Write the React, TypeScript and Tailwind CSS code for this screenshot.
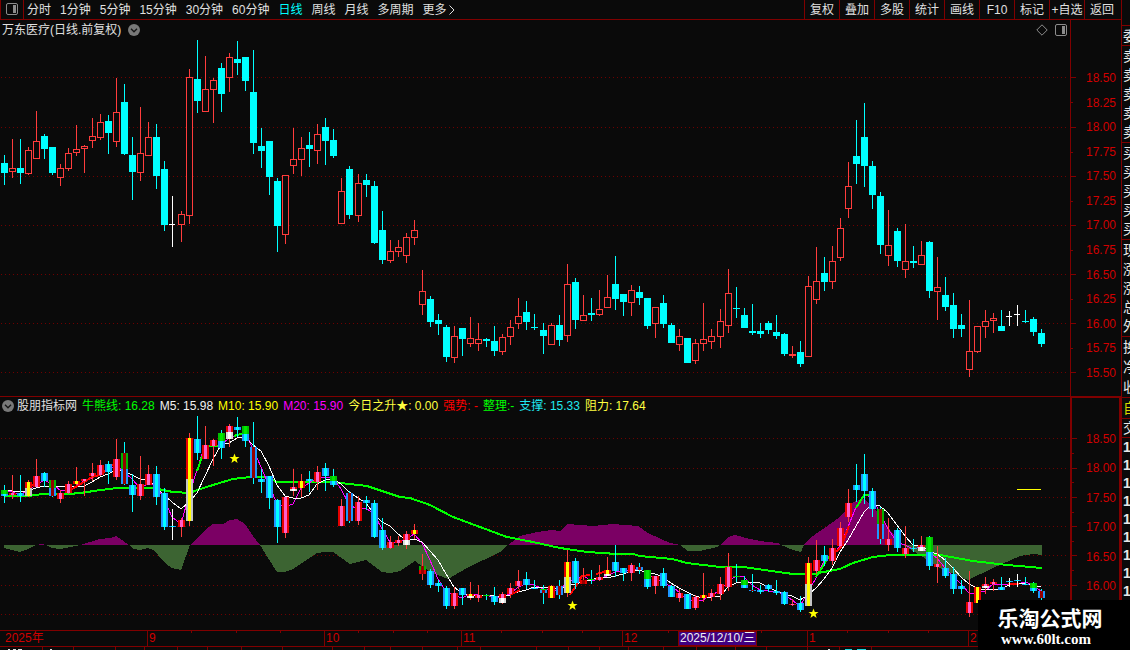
import React from "react";

type Kind = "U" | "D" | "W" | "S";
type Candle = [x: number, high: number, top: number, bottom: number, low: number, kind: Kind];

const BG = "#0a0a0a";

const periods = ["分时", "1分钟", "5分钟", "15分钟", "30分钟", "60分钟", "日线", "周线", "月线", "多周期", "更多"];
const tools = ["复权", "叠加", "多股", "统计", "画线", "F10", "标记", "+自选", "返回"];

const indicators = [
  { text: "牛熊线: 16.28", color: "text-[#00ff00]" },
  { text: "M5: 15.98", color: "text-[#f0f0f0]" },
  { text: "M10: 15.90", color: "text-[#ffff00]" },
  { text: "M20: 15.90", color: "text-[#ff00ff]" },
  { text: "今日之升★: 0.00", color: "text-[#ffff40]" },
  { text: "强势: -", color: "text-[#ff0000]" },
  { text: "整理:-", color: "text-[#00ff00]" },
  { text: "支撑: 15.33", color: "text-[#20e8f0]" },
  { text: "阻力: 17.64", color: "text-[#ffff40]" },
];

const priceLabels = ["18.50", "18.25", "18.00", "17.75", "17.50", "17.25", "17.00", "16.75", "16.50", "16.25", "16.00", "15.75", "15.50"];
const subLabels = ["18.50", "18.00", "17.50", "17.00", "16.50", "16.00"];

const months = [
  { label: "2025年", span: 147 },
  { label: "9", span: 177 },
  { label: "10", span: 137 },
  { label: "11", span: 161 },
  { label: "12", span: 185 },
  { label: "1", span: 161 },
  { label: "2", span: 153 },
];

const quoteGroups = [
  { chars: ["委"], height: "h-[20px]", color: "text-[#e8e8e8]" },
  { chars: ["卖", "卖", "卖", "卖", "卖"], height: "h-[97px]", color: "text-[#e8e8e8]" },
  { chars: ["买", "买", "买", "买", "买"], height: "h-[97px]", color: "text-[#e8e8e8]" },
  { chars: ["现", "涨", "涨", "总", "外"], height: "h-[97px]", color: "text-[#e8e8e8]" },
  { chars: ["换", "净", "收"], height: "h-[61px]", color: "text-[#e8e8e8]" },
  { chars: ["自"], height: "h-[21px]", color: "text-[#d8d800]" },
  { chars: ["交"], height: "h-[19px]", color: "text-[#e8e8e8]" },
];

const candles: Candle[] = [
  [4, 155, 163, 173, 185, "D"],
  [12, 139, 168, 172, 178, "U"],
  [20, 139, 168, 173, 184, "D"],
  [28, 147, 150, 174, 175, "U"],
  [36, 111, 141, 159, 159, "U"],
  [44, 134, 136, 149, 159, "D"],
  [52, 147, 147, 173, 175, "D"],
  [60, 164, 168, 178, 186, "U"],
  [68, 148, 153, 169, 171, "U"],
  [76, 125, 149, 153, 156, "U"],
  [84, 145, 146, 149, 173, "U"],
  [92, 118, 136, 141, 148, "U"],
  [100, 114, 122, 138, 140, "U"],
  [108, 115, 121, 133, 154, "D"],
  [116, 78, 112, 142, 147, "U"],
  [124, 84, 102, 154, 155, "D"],
  [132, 137, 155, 172, 200, "D"],
  [140, 107, 153, 173, 181, "U"],
  [148, 122, 137, 156, 156, "U"],
  [156, 124, 137, 176, 189, "D"],
  [164, 161, 169, 225, 231, "D"],
  [172, 196, 224, 225, 247, "W"],
  [181, 211, 214, 225, 242, "U"],
  [189, 69, 77, 216, 224, "U"],
  [197, 40, 79, 101, 113, "D"],
  [205, 56, 89, 112, 112, "U"],
  [213, 78, 80, 90, 123, "U"],
  [221, 63, 68, 94, 112, "D"],
  [229, 53, 57, 78, 92, "U"],
  [237, 41, 59, 63, 75, "D"],
  [245, 57, 57, 81, 91, "D"],
  [253, 50, 92, 143, 154, "D"],
  [261, 128, 146, 151, 168, "D"],
  [269, 141, 141, 177, 195, "D"],
  [277, 178, 181, 226, 252, "D"],
  [285, 175, 175, 235, 244, "U"],
  [293, 128, 159, 166, 174, "U"],
  [301, 137, 148, 160, 176, "U"],
  [309, 132, 145, 149, 167, "D"],
  [317, 124, 134, 151, 164, "U"],
  [325, 118, 127, 141, 165, "D"],
  [333, 129, 140, 156, 158, "D"],
  [341, 178, 191, 224, 224, "U"],
  [349, 166, 169, 215, 219, "D"],
  [358, 174, 183, 216, 222, "U"],
  [366, 174, 180, 185, 197, "D"],
  [374, 181, 186, 243, 244, "D"],
  [382, 211, 230, 260, 264, "D"],
  [390, 240, 251, 261, 263, "U"],
  [398, 240, 247, 252, 257, "U"],
  [406, 233, 237, 256, 263, "U"],
  [414, 220, 230, 238, 245, "U"],
  [422, 270, 291, 305, 315, "U"],
  [430, 296, 299, 322, 327, "D"],
  [438, 314, 320, 324, 335, "D"],
  [446, 325, 327, 357, 362, "D"],
  [454, 326, 336, 358, 363, "U"],
  [462, 328, 328, 339, 356, "D"],
  [470, 317, 338, 344, 347, "U"],
  [478, 323, 339, 344, 351, "U"],
  [486, 338, 339, 341, 347, "D"],
  [494, 326, 341, 351, 356, "D"],
  [502, 334, 337, 352, 355, "U"],
  [510, 320, 327, 337, 345, "U"],
  [518, 298, 316, 324, 329, "U"],
  [526, 301, 312, 322, 330, "D"],
  [534, 314, 327, 328, 330, "D"],
  [543, 323, 330, 336, 354, "D"],
  [551, 323, 325, 345, 345, "U"],
  [559, 315, 325, 340, 346, "D"],
  [567, 264, 284, 336, 342, "U"],
  [575, 278, 282, 320, 329, "D"],
  [583, 295, 315, 321, 321, "U"],
  [591, 298, 313, 315, 321, "D"],
  [599, 290, 309, 315, 316, "U"],
  [607, 275, 297, 308, 308, "U"],
  [615, 256, 284, 299, 310, "D"],
  [623, 294, 294, 302, 316, "D"],
  [631, 285, 290, 303, 316, "U"],
  [639, 286, 292, 298, 305, "D"],
  [647, 298, 298, 326, 329, "D"],
  [655, 307, 307, 324, 338, "U"],
  [663, 295, 303, 324, 328, "D"],
  [671, 323, 325, 343, 343, "D"],
  [679, 329, 336, 345, 351, "U"],
  [687, 338, 338, 363, 363, "D"],
  [695, 339, 343, 361, 364, "U"],
  [703, 303, 339, 344, 351, "U"],
  [711, 329, 336, 342, 349, "U"],
  [720, 309, 321, 337, 348, "U"],
  [728, 269, 293, 326, 333, "U"],
  [736, 287, 308, 309, 318, "D"],
  [744, 308, 315, 328, 328, "D"],
  [752, 304, 331, 333, 335, "D"],
  [760, 323, 331, 334, 338, "D"],
  [768, 321, 323, 330, 334, "D"],
  [776, 315, 332, 336, 339, "D"],
  [784, 333, 334, 354, 356, "D"],
  [792, 346, 354, 356, 358, "S"],
  [800, 341, 352, 364, 367, "D"],
  [808, 276, 286, 357, 357, "U"],
  [816, 247, 281, 300, 304, "U"],
  [824, 257, 273, 282, 291, "D"],
  [832, 246, 261, 282, 289, "U"],
  [840, 218, 228, 258, 261, "U"],
  [848, 162, 186, 209, 218, "U"],
  [856, 120, 156, 164, 184, "D"],
  [864, 103, 137, 166, 187, "D"],
  [872, 161, 166, 195, 209, "D"],
  [880, 192, 196, 245, 254, "D"],
  [888, 210, 245, 256, 266, "U"],
  [897, 228, 231, 261, 267, "D"],
  [905, 224, 261, 270, 278, "U"],
  [913, 246, 261, 263, 268, "D"],
  [921, 241, 255, 265, 265, "U"],
  [929, 241, 242, 291, 298, "D"],
  [937, 257, 287, 292, 320, "U"],
  [945, 277, 295, 307, 311, "D"],
  [953, 293, 305, 329, 338, "D"],
  [961, 314, 325, 329, 337, "D"],
  [969, 300, 351, 370, 377, "U"],
  [977, 326, 326, 352, 353, "U"],
  [985, 310, 321, 327, 338, "U"],
  [993, 313, 318, 321, 333, "U"],
  [1001, 310, 326, 331, 331, "D"],
  [1009, 311, 316, 317, 326, "W"],
  [1017, 305, 314, 315, 326, "W"],
  [1025, 310, 321, 322, 323, "D"],
  [1033, 317, 319, 332, 336, "D"],
  [1041, 329, 333, 344, 347, "D"],
];

// [edge, centre] of the two-tone bodies in the indicator pane
const skins: Record<string, [string, string]> = {
  U: ["#e60000", "#ff5fc8"],
  D: ["#1e96ff", "#00ffff"],
  Y: ["#e60000", "#ffff00"],
  V: ["#c4c4c4", "#ffff00"],
  X: ["#dcdcdc", "#ffffff"],
  G: ["#00c000", "#00e800"],
  R: ["#1e96ff", "#960000"],
  K: ["#00b400", "#960000"],
  S: ["#e60000", "#960000"],
};

// candle index -> skin of the upper and lower part, and where they meet
const signals: Record<number, [string, string, number?]> = {
  0: ["G", "D", 0.7],
  3: ["Y", "V", 0.4],
  6: ["K", "R", 0.5],
  9: ["Y", "Y"],
  15: ["K", "R", 0.5],
  23: ["Y", "V", 0.49],
  27: ["G", "D", 0.52],
  28: ["U", "X", 0.45],
  30: ["G", "D", 0.52],
  31: ["R", "R"],
  36: ["U", "X", 0.4],
  37: ["Y", "Y"],
  41: ["G", "D", 0.5],
  43: ["R", "R"],
  50: ["U", "X", 0.5],
  51: ["Y", "Y"],
  52: ["K", "S", 0.55],
  58: ["Y", "X", 0.5],
  60: ["G", "G"],
  62: ["U", "X", 0.4],
  67: ["G", "R", 0.3],
  68: ["Y", "Y"],
  69: ["R", "R"],
  70: ["Y", "V", 0.47],
  72: ["S", "S"],
  73: ["G", "G"],
  75: ["Y", "X", 0.6],
  79: ["R", "R"],
  80: ["G", "D", 0.55],
  87: ["Y", "Y"],
  91: ["G", "D", 0.5],
  92: ["G", "D", 0.6],
  93: ["R", "R"],
  100: ["Y", "V", 0.49],
  109: ["K", "R", 0.5],
  114: ["U", "X", 0.4],
  115: ["G", "D", 0.53],
  121: ["Y", "Y"],
  122: ["U", "X", 0.6],
  128: ["G", "D", 0.6],
  129: ["R", "R"],
};

const toSub = (y: number) => Math.round(438.5 + (y - 77.5) * 0.5976);

const average = (size: number) => {
  const closes = [160, 162, 164, 160, ...candles.map((c) => (c[5] === "D" ? c[3] : c[2]))];
  return candles
    .map((c, i) => {
      const part = closes.slice(i + 5 - size, i + 5);
      return `${c[0]},${toSub(part.reduce((a, b) => a + b, 0) / size)}`;
    })
    .join(" ");
};

const bullBear =
  "4,496 28,496 43,494 70,494 88,492 93,491 117,488 127,488 153,488 173,492 190,493 197,490 213,485 233,479 250,477 267,477 277,482 333,482 340,483 367,486 400,497 410,498 430,505 453,517 480,527 507,537 533,542 560,548 587,552 617,554 633,554 640,556 672,559 687,563 720,567 743,567 793,574 813,574 840,569 853,563 873,557 890,555 940,555 973,561 1007,565 1042,568";

const wave: [number, number][] = [
  [4, 548], [12, 550], [20, 552], [28, 549], [36, 545], [41, 544], [46, 545], [52, 548], [60, 549], [70, 547],
  [80, 545], [90, 542], [100, 539], [110, 538], [116, 536], [122, 540], [129, 545], [133, 549], [140, 550],
  [148, 548], [153, 550], [158, 555], [165, 563], [172, 568], [181, 570], [190, 545], [197, 538], [205, 530],
  [213, 524], [223, 524], [230, 520], [237, 519], [245, 524], [253, 536], [260, 545], [268, 558], [277, 572],
  [285, 572], [293, 569], [305, 561], [317, 553], [325, 552], [333, 552], [350, 564], [366, 560], [382, 572],
  [390, 573], [400, 571], [415, 561], [430, 572], [448, 579], [467, 568], [500, 552], [508, 545], [520, 536],
  [537, 532], [552, 530], [560, 531], [567, 524], [593, 526], [613, 524], [638, 526], [648, 533], [670, 543],
  [680, 545], [688, 551], [700, 551], [717, 547], [720, 545], [728, 537], [735, 535], [750, 539], [767, 542],
  [778, 543], [781, 545], [793, 550], [801, 552], [804, 545], [810, 538], [823, 529], [840, 517], [853, 502],
  [864, 499], [873, 508], [880, 515], [890, 530], [900, 541], [903, 545], [920, 555], [940, 568], [968, 580],
  [993, 568], [1020, 556], [1033, 554], [1042, 555],
];

const waveArea = (side: "up" | "down") => {
  const pts = wave.map(([x, y]) => `${x},${side === "up" ? Math.min(y, 545) : Math.max(y, 545)}`);
  return `4,545 ${pts.join(" ")} 1042,545`;
};

function Grid({ rows }: { rows: number[] }) {
  return (
    <g stroke="#700000" strokeDasharray="1 3">
      {rows.map((y) => (
        <line key={y} x1="1" x2="1068" y1={y + 0.5} y2={y + 0.5} />
      ))}
    </g>
  );
}

function PriceChart() {
  return (
    <svg className="block h-[356px] w-full" viewBox="0 40 1070 356" preserveAspectRatio="none" shapeRendering="crispEdges">
      <Grid rows={[77, 127, 176, 225, 274, 323, 372]} />
      {candles.map(([x, high, top, bottom, low, kind]) => {
        const color = kind === "D" ? "#00ffff" : kind === "W" ? "#ffffff" : "#ff3c3c";
        const hollow = kind === "U";
        return (
          <g key={x}>
            <rect x={x} y={high} width="1" height={low - high} fill={color} />
            {hollow ? (
              <rect x={x - 2.5} y={top + 0.5} width="6" height={bottom - top - 1} fill={BG} stroke={color} />
            ) : (
              <rect x={x - 3} y={top} width={kind === "W" ? 6 : 7} height={bottom - top} fill={color} />
            )}
          </g>
        );
      })}
    </svg>
  );
}

function Body({ x, y, h, skin }: { x: number; y: number; h: number; skin: string }) {
  const [edge, centre] = skins[skin];
  return (
    <>
      <rect x={x - 3} y={y} width="7" height={h} fill={edge} />
      <rect x={x - 1} y={y} width="3" height={h} fill={centre} />
    </>
  );
}

function Star({ x, y }: { x: number; y: number }) {
  return (
    <path
      transform={`translate(${x} ${y})`}
      d="M0-5 1.3-1.6 5-1.5 2.1.8 3.1 4.4 0 2.3-3.1 4.4-2.1.8-5-1.5-1.3-1.6Z"
      fill="#ffff00"
      shapeRendering="auto"
    />
  );
}

function IndicatorChart() {
  return (
    <svg className="block h-[215px] w-full" viewBox="0 415 1070 215" preserveAspectRatio="none" shapeRendering="crispEdges">
      <Grid rows={[438, 468, 497, 526, 555, 585, 614]} />
      <polygon points={waveArea("up")} fill="#7b0064" />
      <polygon points={waveArea("down")} fill="#3c6432" />
      <g fill="none">
        <polyline points={bullBear} stroke="#00ff00" strokeWidth="2" />
        <polyline points={average(3)} stroke="#ff00ff" />
        <polyline points={average(5)} stroke="#ffffff" />
        <g stroke="#00ff00" strokeWidth="2">
          <polyline points="197,471 202,457 205,452" />
          <polyline points="209,446 219,446" />
          <polyline points="234,436 244,433" />
          <polyline points="816,577 825,563 829,556" />
          <polyline points="856,508 864,495 872,495" />
        </g>
        <g stroke="#ff0000" strokeWidth="2">
          <polyline points="28,487 36,484" />
          <polyline points="72,489 84,482 92,477 100,475 116,462" />
          <polyline points="510,595 520,590" />
          <polyline points="570,595 582,576 590,575" />
          <polyline points="596,574 608,571" />
          <polyline points="836,552 841,547 849,526" />
          <polyline points="1008,584 1019,584" />
        </g>
      </g>
      {candles.map(([x, high, top, bottom, low, kind], i) => {
        const color = kind === "D" ? "#00ffff" : kind === "W" ? "#ffffff" : "#ff3c3c";
        const y = toSub(top);
        const h = Math.max(toSub(bottom) - y, 1);
        const base = kind === "W" ? "D" : kind === "S" ? "U" : kind;
        const [upper, lower, split = 1] = signals[i] ?? [base, base];
        const cut = Math.round(h * split);
        return (
          <g key={x}>
            <rect x={x} y={toSub(high)} width="1" height={toSub(low) - toSub(high)} fill={color} />
            <Body x={x} y={y} h={cut} skin={upper} />
            {cut < h && <Body x={x} y={y + cut} h={h - cut} skin={lower} />}
          </g>
        );
      })}
      <rect x="1017" y="489" width="24" height="1" fill="#ffff00" />
      <Star x={234.5} y={458.5} />
      <Star x={572.5} y={605.5} />
      <Star x={813.5} y={613.5} />
    </svg>
  );
}

function Ticks({ major, minor, offset, className }: { major: number[]; minor: number[]; offset: number; className: string }) {
  return (
    <svg className={className} viewBox={`0 ${offset} 5 200`} preserveAspectRatio="xMinYMin slice" shapeRendering="crispEdges" overflow="visible">
      {major.map((y) => (
        <rect key={y} y={y} width="5" height="1" fill="#800000" />
      ))}
      {minor.map((y) => (
        <rect key={y} y={y} width="2" height="1" fill="#800000" />
      ))}
    </svg>
  );
}

function PanelIcon() {
  return (
    <svg className="size-3 shrink-0" viewBox="0 0 12 12" fill="none">
      <rect x="0.5" y="0.5" width="11" height="11" rx="1.5" stroke="#8c8c8c" />
      <rect x="7" y="2" width="3" height="8" fill="#8c8c8c" />
    </svg>
  );
}

function CircleChevron() {
  return (
    <svg className="size-3 shrink-0" viewBox="0 0 12 12" fill="none">
      <circle cx="6" cy="6" r="6" fill="#787878" />
      <path d="M3 4.8 6 7.8l3-3" stroke="#141414" strokeWidth="1.3" />
    </svg>
  );
}

function Toolbar() {
  return (
    <header className="flex h-5 border-b border-[#800000]">
      <button type="button" aria-label="切换侧栏" className="flex w-6 shrink-0 items-center justify-center border-x border-[#800000] pb-0.5">
        <PanelIcon />
      </button>
      <nav className="flex flex-1 items-center gap-[9px] whitespace-nowrap pl-[3px] leading-[18px]">
        {periods.map((name) => (
          <button key={name} type="button" className={name === "日线" ? "text-[#00ffff]" : "text-[#e0e0e0]"}>
            {name}
          </button>
        ))}
        <svg className="-ml-2 h-3 w-2" viewBox="0 0 8 12" fill="none">
          <path d="M1.500 1.500 6 6l-4.500 4.500" stroke="#e0e0e0" />
        </svg>
      </nav>
      <div className="flex pr-0.5">
        {tools.map((name) => (
          <button key={name} type="button" className="w-[35px] whitespace-nowrap border-l border-[#800000] text-center leading-[18px] text-[#e0e0e0]">
            {name}
          </button>
        ))}
      </div>
    </header>
  );
}

function QuoteStrip() {
  return (
    <aside className="flex w-[9px] shrink-0 flex-col overflow-hidden border-l border-[#800000] pt-[25px] text-sm leading-none">
      {quoteGroups.map((group, i) => (
        <div key={i} className={`flex shrink-0 flex-col justify-around border-t border-[#800000] pl-px ${group.height} ${group.color}`}>
          {group.chars.map((char, j) => (
            <span key={j} className="block w-4">{char}</span>
          ))}
        </div>
      ))}
      <div className="border-t border-[#800000] pl-px font-bold leading-[18px] text-[#e8e8e8]">
        {Array.from({ length: 9 }, (_, i) => (
          <span key={i} className="block">1</span>
        ))}
      </div>
    </aside>
  );
}

export default function App() {
  return (
    <div className="relative flex overflow-hidden bg-[#0a0a0a] font-['Liberation_Sans','Noto_Sans_CJK_SC',sans-serif] text-xs">
      <main className="min-w-0 flex-1">
        <Toolbar />

        {/* Daily candles */}
        <section className="flex">
          <div className="min-w-0 flex-1">
            <div className="flex h-5 items-center justify-between pl-0.5 pr-[3px]">
              <h1 className="flex items-center gap-[7px] text-[#e0e0e0]">
                万东医疗(日线.前复权)
                <button type="button" aria-label="展开"><CircleChevron /></button>
              </h1>
              <div className="flex items-center gap-[7px]">
                <svg className="size-3" viewBox="0 0 12 12" fill="none">
                  <path d="M6 .8 11.200 6 6 11.200 .8 6Z" stroke="#8c8c8c" />
                </svg>
                <PanelIcon />
              </div>
            </div>
            <PriceChart />
          </div>
          <div className="relative w-[51px] border-l border-[#800000]">
            <Ticks
              className="absolute left-0 top-0 h-[200px] w-[5px]"
              offset={20}
              major={[77, 127, 176, 225, 274, 323, 372]}
              minor={[102, 152, 201, 250, 299, 348]}
            />
            <ul className="flex h-[376px] flex-col justify-between pb-[15px] pr-[5px] pt-[50px] text-right leading-4 text-[#d00000]">
              {priceLabels.map((price) => (
                <li key={price}>{price}</li>
              ))}
            </ul>
          </div>
        </section>

        {/* Indicator pane */}
        <section className="flex">
          <div className="min-w-0 flex-1 border-t border-[#800000]">
            <div className="flex h-[18px] items-center gap-[5px] whitespace-nowrap pl-0.5">
              <h2 className="flex items-center gap-[3px] text-[#e0e0e0]">
                <CircleChevron />
                股朋指标网
              </h2>
              {indicators.map((item) => (
                <span key={item.text} className={item.color}>{item.text}</span>
              ))}
            </div>
            <IndicatorChart />
          </div>
          <div className="relative w-[51px] border-x-2 border-t-2 border-[#800000]">
            <Ticks
              className="absolute left-0 top-0 h-[200px] w-[5px]"
              offset={398}
              major={[438, 468, 497, 526, 555, 585]}
              minor={[453, 482, 512, 541, 570]}
            />
            <ul className="flex h-[196px] flex-col justify-between pr-[3px] pt-[33px] text-right leading-4 text-[#d00000]">
              {subLabels.map((price) => (
                <li key={price}>{price}</li>
              ))}
            </ul>
          </div>
        </section>

        {/* Date axis */}
        <div className="relative h-4 border-t border-[#800000] leading-[15px] text-[#d00000]">
          <div className="grid" style={{ gridTemplateColumns: months.map((m) => `${m.span}fr`).join(" ") }}>
            {months.map((month, i) => (
              <span key={month.label} className={i === 0 ? "pl-[5px]" : "border-l border-[#800000] pl-px"}>
                {month.label}
              </span>
            ))}
          </div>
          <svg className="absolute left-0 top-0 h-0.5 w-full" viewBox="0 0 1121 2" preserveAspectRatio="none" shapeRendering="crispEdges">
            {[191, 236, 280, 358, 393, 427, 501, 542, 582, 668, 761, 847, 888, 928].map((x) => (
              <rect key={x} x={x} width="1" height="2" fill="#800000" />
            ))}
          </svg>
          <span className="absolute left-[678px] top-0 h-[15px] border border-[#800000] bg-[#400080] px-px leading-[13px] text-[#f0f0f0]">
            2025/12/10/三
          </span>
        </div>
        <div className="h-1 overflow-hidden border-t border-[#800000]">
          <svg className="block h-[3px] w-full" viewBox="0 0 1121 3" preserveAspectRatio="none" shapeRendering="crispEdges">
            {[42, 73, 115, 144, 177, 207, 241, 282, 332, 364, 390, 422, 457, 480, 536, 568, 599, 628, 663, 696, 735, 766, 807, 839, 871].map((x) => (
              <rect key={x} x={x} width="1" height="3" fill="#800000" />
            ))}
            <path d="M8 2h2v1H8zM13 2h3v1h-3zM18 2h4v1h-4zM50 2h2v1h-2zM828 2h2v1h-2z" fill="#e0e0e0" />
            <path d="M845 2h6v1h-6zM849 2h3v1h-3zM857 2h9v1h-9z" fill="#20d8e0" />
          </svg>
        </div>
      </main>

      <QuoteStrip />

      <a
        href="#top"
        className="absolute bottom-0 right-0 flex h-[50px] w-[152px] flex-col items-center bg-black pr-2 pt-2 font-bold text-white"
      >
        <span className="whitespace-nowrap text-[21px] leading-[22px]">乐淘公式网</span>
        <span className="pr-2 font-['Liberation_Serif',serif] text-[15px] leading-[18px]">www.60lt.com</span>
      </a>
    </div>
  );
}
